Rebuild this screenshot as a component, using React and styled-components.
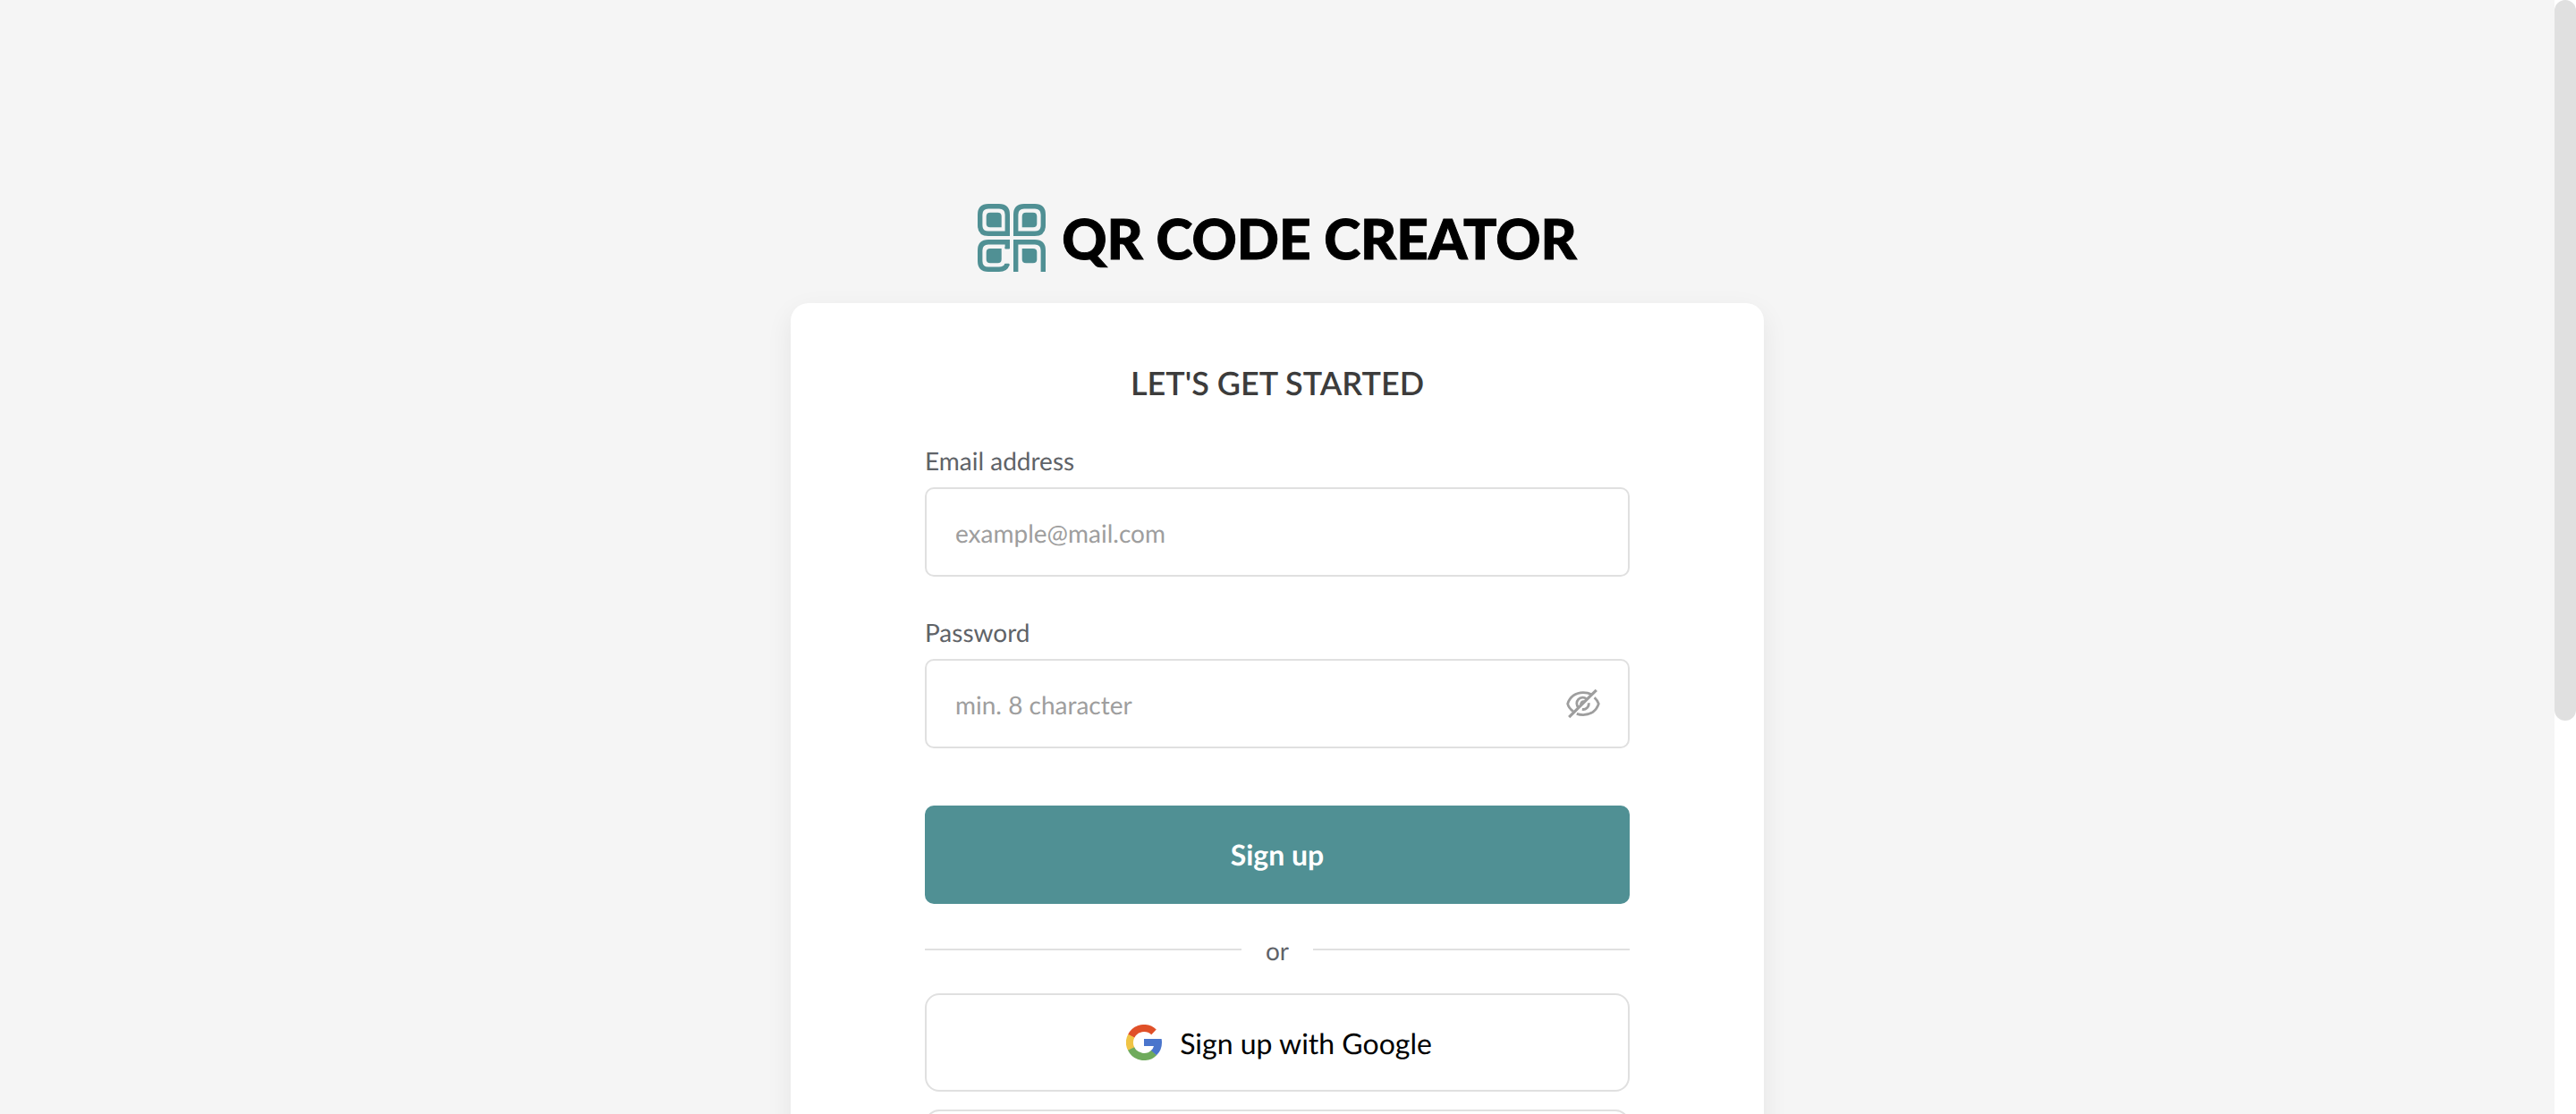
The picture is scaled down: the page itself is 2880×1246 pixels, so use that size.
import React, { useState } from "react";
import styled, { createGlobalStyle } from "styled-components";

const GlobalStyle = createGlobalStyle`
  *, *::before, *::after { box-sizing: border-box; }
  html, body { margin: 0; background: #fff; }
  body, button, input {
    font-family: Lato, "Open Sans", sans-serif;
    text-rendering: geometricPrecision;
    -webkit-font-smoothing: antialiased;
  }
`;

const Viewport = styled.div`
  display: grid;
  grid-template-columns: minmax(0, 1fr) 24px;
  height: 100vh;
  overflow: hidden;
`;

const Page = styled.main`
  display: flex;
  flex-direction: column;
  align-items: center;
  padding: 228px 24px 0;
  overflow: hidden;
  background: #f5f5f5;
`;

const ScrollTrack = styled.div`
  height: 100%;
  background: #fff;
`;

const ScrollThumb = styled.div`
  height: ${({ $ratio }) => $ratio}%;
  border-radius: 12px;
  background: #e0e0e0;
`;

const Brand = styled.div`
  display: flex;
  flex-shrink: 0;
  align-items: center;
  gap: 18px;
  height: 76px;
  margin-bottom: 35px;
`;

const BrandName = styled.span`
  padding-top: 2px;
  color: #000;
  font-size: 62px;
  font-weight: 900;
  line-height: 76px;
  white-space: nowrap;
  -webkit-text-stroke: 1px #000;
`;

const Card = styled.section`
  flex-shrink: 0;
  width: 100%;
  max-width: 1088px;
  padding: 64px 150px;
  border-radius: 20px;
  background: #fff;
  box-shadow: 0 10px 30px rgba(0, 0, 0, 0.07);
`;

const Title = styled.h1`
  margin: 0 0 44px;
  color: #3c3c3c;
  font-family: "Lato Semibold", Lato, sans-serif;
  font-size: 36px;
  font-weight: 600;
  line-height: 50px;
  text-align: center;
`;

const Form = styled.form`
  display: flex;
  flex-direction: column;
  gap: 44px;
`;

const Field = styled.div`
  display: flex;
  flex-direction: column;
  gap: 12px;
`;

const Label = styled.label`
  color: #5f6368;
  font-size: 28px;
  line-height: 36px;
`;

const InputBox = styled.div`
  display: flex;
  align-items: center;
  height: 100px;
  padding: 0 30px 0 32px;
  border: 2px solid #e0e0e0;
  border-radius: 10px;
  background: #fff;
`;

const Input = styled.input`
  flex: 1;
  min-width: 0;
  height: 100%;
  padding: 2px 0 0;
  border: 0;
  outline: 0;
  background: transparent;
  color: #3c3c3c;
  font-size: 28px;

  &::placeholder {
    color: #9e9e9e;
    opacity: 1;
  }
`;

const IconButton = styled.button`
  display: flex;
  padding: 0;
  border: 0;
  background: none;
  color: #9e9e9e;
  cursor: pointer;
`;

const SubmitButton = styled.button`
  height: 110px;
  margin-top: 20px;
  padding: 0 0 2px;
  border: 0;
  border-radius: 10px;
  background: #509094;
  color: #fff;
  font-size: 32px;
  font-weight: 700;
  cursor: pointer;
`;

const Divider = styled.div`
  display: flex;
  align-items: center;
  margin: 32px 0 30px;
  color: #5f6368;
  font-size: 28px;
  line-height: 36px;

  &::before, &::after {
    content: "";
    flex: 1;
    height: 2px;
    background: #e0e0e0;
  }
`;

const DividerText = styled.span`
  width: 80px;
  padding-top: 2px;
  text-align: center;
`;

const Providers = styled.div`
  display: flex;
  flex-direction: column;
  gap: 20px;
`;

const ProviderButton = styled.button`
  display: flex;
  align-items: center;
  justify-content: center;
  gap: 20px;
  height: 110px;
  padding: 0 6px 0 10px;
  border: 2px solid #e0e0e0;
  border-radius: 16px;
  background: #fff;
  color: #000;
  font-size: 32px;
  cursor: pointer;
`;

function BrandMark() {
  return (
    <svg width="76" height="76" viewBox="0 0 76 76" fill="none" aria-hidden="true">
      <g stroke="#509094" strokeWidth="5.4">
        <path d="M12 2.7H24Q33.3 2.7 33.3 12V33.3H12Q2.7 33.3 2.7 24V12Q2.7 2.7 12 2.7Z" />
        <path d="M52 2.7H64Q73.3 2.7 73.3 12V24Q73.3 33.3 64 33.3H42.7V12Q42.7 2.7 52 2.7Z" />
        <path d="M33.3 50V42.7H12Q2.7 42.7 2.7 52V64Q2.7 73.3 12 73.3H24Q31.2 73.3 33 67.6" />
        <path d="M42.7 76V42.7H64Q73.3 42.7 73.3 52V76" />
      </g>
      <g fill="#509094">
        <path d="M14 9.7H22.5Q26.7 9.7 26.7 14V26.3H14Q9.7 26.3 9.7 22V14Q9.7 9.7 14 9.7Z" />
        <path d="M54 9.7H62Q66.3 9.7 66.3 14V22Q66.3 26.3 62 26.3H49.7V14Q49.7 9.7 54 9.7Z" />
        <path d="M14 50H26.7V62Q26.7 66.3 22.5 66.3H14Q9.7 66.3 9.7 62V54Q9.7 50 14 50Z" />
        <path d="M49.7 50H62Q66.3 50 66.3 54V62Q66.3 66.3 62 66.3H54Q49.7 66.3 49.7 62Z" />
        <path d="M30.6 48H36V49.5Q36 50.5 35 50.5H30.6Z" />
        <rect x="30.6" y="66.8" width="5" height="2.6" rx="1" />
      </g>
    </svg>
  );
}

function HiddenEye() {
  return (
    <svg width="40" height="40" viewBox="0 0 40 40" fill="none" stroke="currentColor" strokeWidth="2.8" aria-hidden="true">
      <path d="M8.8 28.6C5.6 26.2 3.4 23.2 2.7 20.2C5 12.4 11.8 7.6 20 7.6C23.6 7.6 26.8 8.4 29.6 10" />
      <path d="M32.6 13.2C34.8 15.2 36.6 17.6 37.3 20.2C35 28 28.2 32.6 20 32.6C17.4 32.6 15 32.2 12.8 31.4" />
      <path d="M14.8 24.4A6.4 6.4 0 0 1 23.8 15" />
      <path d="M26.2 19.2A6.4 6.4 0 0 1 18.8 26.4" />
      <path d="M17.6 21.2A2.8 2.8 0 0 1 21.2 17.8" />
      <path d="M4.2 35.2L34.8 4.8" strokeWidth="3.2" />
    </svg>
  );
}

function GoogleMark() {
  return (
    <svg width="40" height="40" viewBox="0 0 40 40" fill="none" strokeWidth="8" aria-hidden="true">
      <path stroke="#e05028" d="M5.6 13A16 16 0 0 1 31 8.4" />
      <path stroke="#f0c445" d="M5.8 27.4A16 16 0 0 1 5.8 12.6" />
      <path stroke="#6fab5c" d="M31.3 31.3A16 16 0 0 1 5.6 27" />
      <path fill="#4a75cc" d="M20 16H39.6Q40 18 40 20Q40 28.8 34 34.3L28 29Q30.2 27 31 24H20Z" />
    </svg>
  );
}

export default function App() {
  const [visible, setVisible] = useState(false);

  return (
    <>
      <GlobalStyle />
      <Viewport>
        <Page>
          <Brand>
            <BrandMark />
            <BrandName>QR CODE CREATOR</BrandName>
          </Brand>
          <Card>
            <Title>LET'S GET STARTED</Title>
            <Form onSubmit={(event) => event.preventDefault()}>
              <Field>
                <Label htmlFor="email">Email address</Label>
                <InputBox>
                  <Input id="email" type="email" placeholder="example@mail.com" />
                </InputBox>
              </Field>
              <Field>
                <Label htmlFor="password">Password</Label>
                <InputBox>
                  <Input id="password" type={visible ? "text" : "password"} placeholder="min. 8 character" />
                  <IconButton type="button" aria-label="Toggle password visibility" onClick={() => setVisible(!visible)}>
                    <HiddenEye />
                  </IconButton>
                </InputBox>
              </Field>
              <SubmitButton type="submit">Sign up</SubmitButton>
            </Form>
            <Divider>
              <DividerText>or</DividerText>
            </Divider>
            <Providers>
              <ProviderButton type="button">
                <GoogleMark />
                Sign up with Google
              </ProviderButton>
              <ProviderButton type="button" />
            </Providers>
          </Card>
        </Page>
        <ScrollTrack>
          <ScrollThumb $ratio={64.7} />
        </ScrollTrack>
      </Viewport>
    </>
  );
}
